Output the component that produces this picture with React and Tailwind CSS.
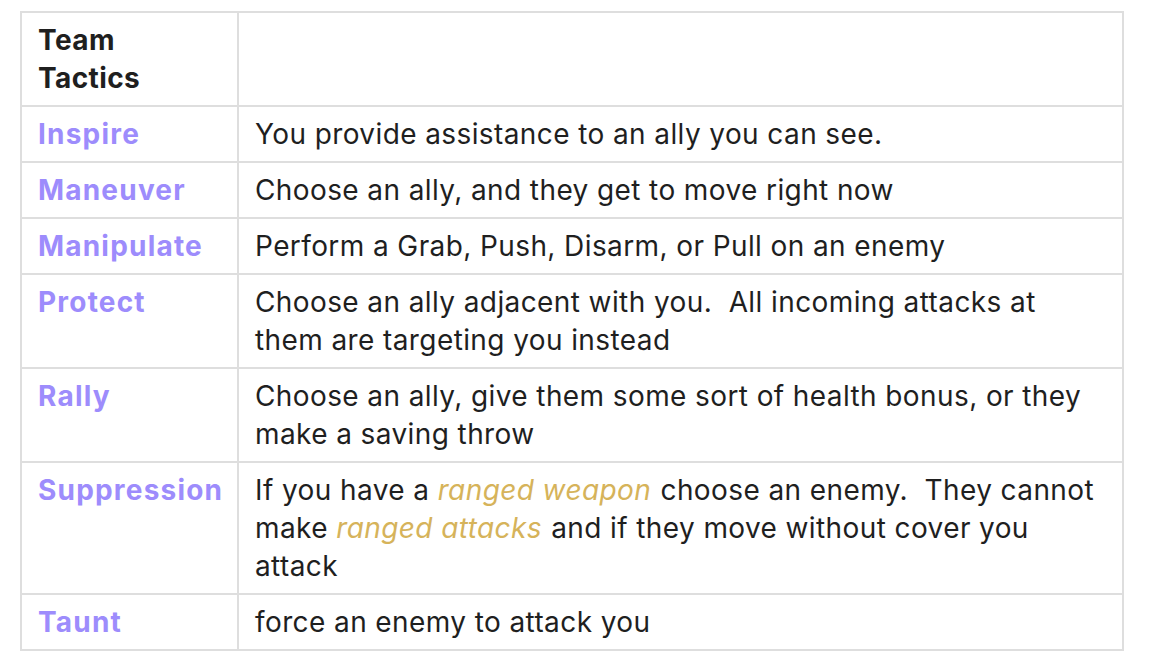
const tactics = [
  { name: 'Inspire', desc: ['You provide assistance to an ally you can see.'] },
  { name: 'Maneuver', desc: ['Choose an ally, and they get to move right now'] },
  { name: 'Manipulate', desc: ['Perform a Grab, Push, Disarm, or Pull on an enemy'] },
  { name: 'Protect', desc: ['Choose an ally adjacent with you.\u00a0 All incoming attacks at them are targeting you instead'] },
  { name: 'Rally', desc: ['Choose an ally, give them some sort of health bonus, or they make a saving throw'] },
  {
    name: 'Suppression',
    desc: [
      'If you have a ',
      { hl: 'ranged weapon' },
      ' choose an enemy.\u00a0 They cannot make ',
      { hl: 'ranged attacks' },
      ' and if they move without cover you attack',
    ],
  },
  { name: 'Taunt', desc: ['force an enemy to attack you'] },
];

export default function App() {
  return (
    <div className="min-h-screen bg-white pl-[20px] pt-[11px] font-['Inter','Liberation_Sans',sans-serif] text-[28px] leading-[38px] tracking-[0.4px] text-[#1f1f1f]">
      <table className="w-[1104px] table-fixed border-collapse border-2 border-[#dedede]">
        <tbody>
          <tr>
            <th className="w-[217px] border-2 border-[#dedede] px-4 py-2 text-left align-top font-bold">
              Team
              <br />
              Tactics
            </th>
            <th className="border-2 border-[#dedede] px-4 py-2"></th>
          </tr>
          {tactics.map((t) => (
            <tr key={t.name}>
              <td className="border-2 border-[#dedede] px-4 py-2 align-top font-bold tracking-[1.2px] text-[#9d8cfc]">
                {t.name}
              </td>
              <td className="border-2 border-[#dedede] px-4 py-2 align-top">
                {t.desc.map((part, i) =>
                  typeof part === 'string' ? (
                    <span key={i}>{part}</span>
                  ) : (
                    <em key={i} className="pr-[1px] text-[#d6b35a]">{part.hl}</em>
                  )
                )}
              </td>
            </tr>
          ))}
        </tbody>
      </table>
    </div>
  );
}
